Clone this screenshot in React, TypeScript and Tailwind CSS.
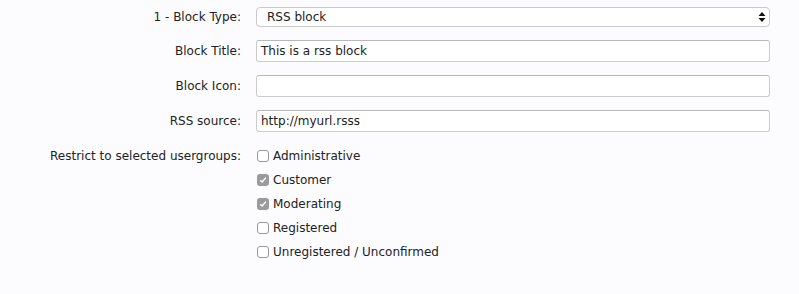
import React from 'react'

const groups = [
  { name: 'Administrative', checked: false },
  { name: 'Customer', checked: true },
  { name: 'Moderating', checked: true },
  { name: 'Registered', checked: false },
  { name: 'Unregistered / Unconfirmed', checked: false },
]

function Row({ label, first, children }: { label: string; first?: boolean; children: React.ReactNode }) {
  return (
    <div className={`flex items-center ${first ? 'h-[33px]' : 'h-[35px]'}`}>
      <div className="w-[241px] text-right">{label}</div>
      <div className="ml-[15px] w-[514px]">{children}</div>
    </div>
  )
}

function Check({ checked }: { checked: boolean }) {
  return checked ? (
    <span className="w-[12px] h-[12px] rounded-[3px] bg-[#9b9b9b] flex items-center justify-center">
      <svg width="8" height="8" viewBox="0 0 8 8">
        <path d="M1.2 4.2 L3.1 6 L6.8 1.8" fill="none" stroke="white" strokeWidth="1.3" />
      </svg>
    </span>
  ) : (
    <span className="w-[12px] h-[12px] rounded-[3px] border border-[#9a9a9a] bg-white" />
  )
}

export default function App() {
  return (
    <div
      className="w-[799px] h-[294px] bg-[#fcfcfe] text-[#222] text-[12px]"
      style={{ fontFamily: '"DejaVu Sans", Verdana, sans-serif' }}
    >
      <Row label="1 - Block Type:" first>
        <div className="h-[20px] border border-[#c9c9c9] rounded-[4px] bg-white flex items-center justify-between pl-[10px] pr-[3px]">
          <span>RSS block</span>
          <svg width="8" height="12" viewBox="0 0 8 12">
            <path d="M4 1 L7.5 5 L0.5 5 Z" fill="#111" />
            <path d="M4 11 L7.5 7 L0.5 7 Z" fill="#111" />
          </svg>
        </div>
      </Row>
      <Row label="Block Title:">
        <div className="h-[22px] border border-[#cbcbcb] border-t-[#b9b9b9] rounded-[3px] bg-white flex items-center pl-[4px]">
          This is a rss block
        </div>
      </Row>
      <Row label="Block Icon:">
        <div className="h-[22px] border border-[#cbcbcb] border-t-[#b9b9b9] rounded-[3px] bg-white" />
      </Row>
      <Row label="RSS source:">
        <div className="h-[22px] border border-[#cbcbcb] border-t-[#b9b9b9] rounded-[3px] bg-white flex items-center pl-[4px]">
          http://myurl.rsss
        </div>
      </Row>
      <div className="flex mt-[6px]">
        <div className="w-[241px] text-right leading-[24px]">Restrict to selected usergroups:</div>
        <div className="ml-[16px] flex flex-col">
          {groups.map((g) => (
            <label key={g.name} className="flex items-center gap-[4px] h-[24px]">
              <Check checked={g.checked} />
              <span>{g.name}</span>
            </label>
          ))}
        </div>
      </div>
    </div>
  )
}
